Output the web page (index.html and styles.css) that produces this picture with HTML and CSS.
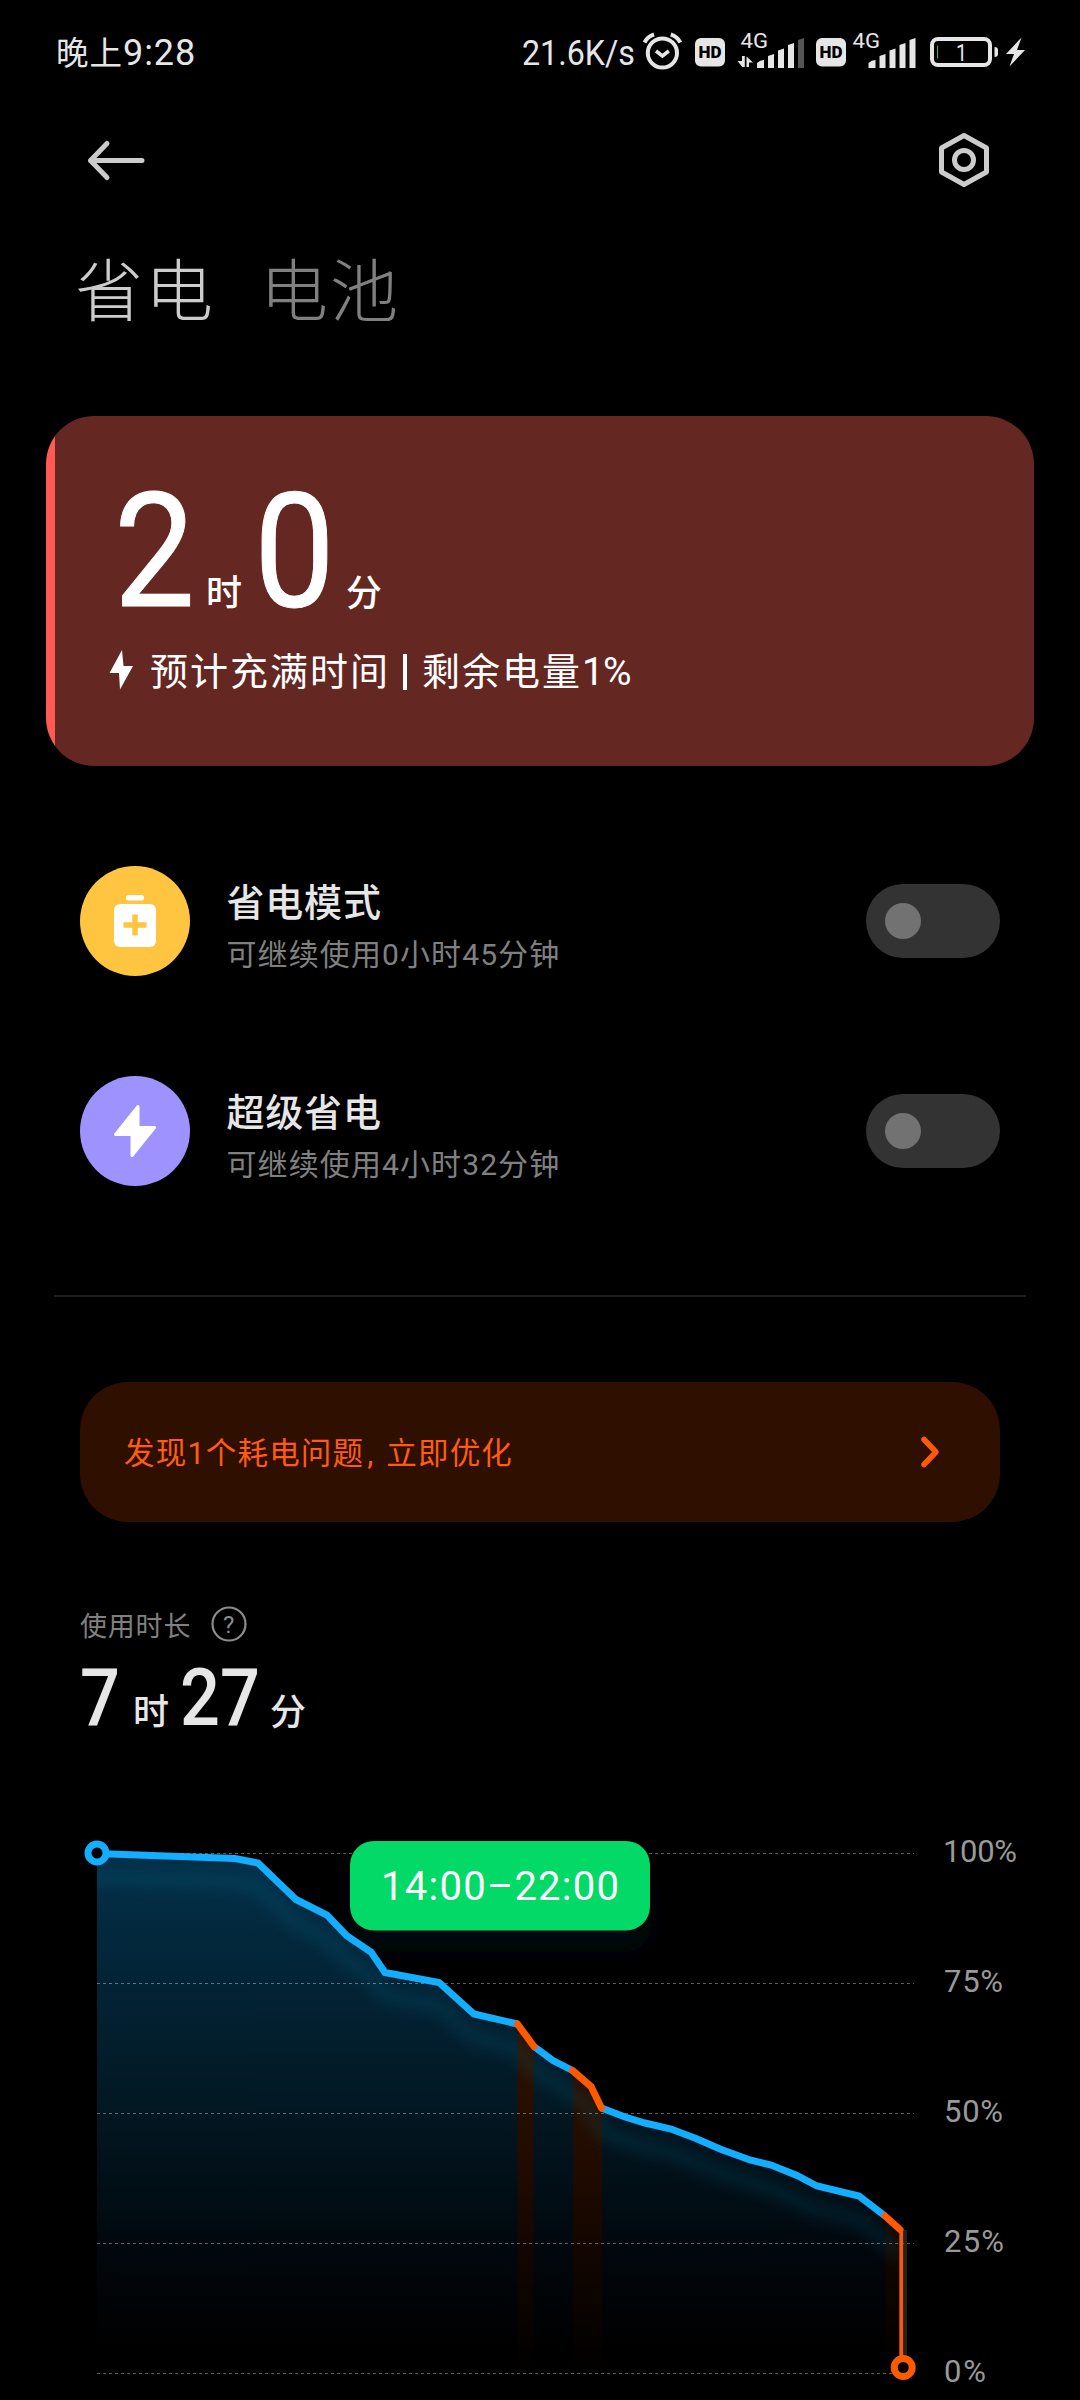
FILE: index.html
```
<!DOCTYPE html>
<html lang="zh-CN">
<head>
<meta charset="utf-8">
<title>省电与电池</title>
<link rel="stylesheet" href="styles.css">
</head>
<body>
<div class="screen">
  <header class="status">
    <div class="clock">晚上<span class="clock-digits">9:28</span></div>
    <svg class="status-icons" width="510" height="60" viewBox="520 20 510 60">
      <g fill="#e6e6e6">
        <text x="522" y="65" font-size="35" textLength="113" lengthAdjust="spacingAndGlyphs">21.6K/s</text>
        <g fill="none" stroke="#e6e6e6">
          <circle cx="662.4" cy="53" r="14.6" stroke-width="4"/>
          <path d="M656 51l6.400 5 6.400-5" stroke-width="3.500"/>
          <path d="M644.500 42.500q3-6 9.500-8M680.300 42.500q-3-6-9.500-8" stroke-width="4"/>
        </g>
        <rect x="695" y="38" width="30" height="28.500" rx="6"/>
        <rect x="816" y="38" width="30" height="28.500" rx="6"/>
        <g fill="#000" font-size="16.500" font-weight="900">
          <text x="698.500" y="58" textLength="23" lengthAdjust="spacingAndGlyphs">HD</text>
          <text x="819.500" y="58" textLength="23" lengthAdjust="spacingAndGlyphs">HD</text>
        </g>
        <text x="740.500" y="48" font-size="20" textLength="27.500" lengthAdjust="spacingAndGlyphs">4G</text>
        <text x="852.500" y="48" font-size="20" textLength="27.500" lengthAdjust="spacingAndGlyphs">4G</text>
        <path d="M742 56h2.800v11h-2.500l-4.800-6h4.500zM746.500 56.500l6.500 6h-4v4.500h-2.500z"/>
        <path d="M757 68v-5q3-3 7-3v8zM768 68V56l6-2v14zM778 68V50.500l6-2V68zM788 68V45l6-2v25z"/>
        <path d="M798 68V40l6-2v30z" fill="#555"/>
        <path d="M868.500 68v-5q3-3 7-3v8zM879.500 68V56l6-2v14zM889.500 68V50.500l6-2V68zM899.500 68V45l6-2v25zM909.500 68V40l6-2v30z"/>
        <rect x="932" y="39" width="58" height="26" rx="6" fill="none" stroke="#e6e6e6" stroke-width="4"/>
        <path d="M994.500 47q3.500 0 3.500 3v4q0 3-3.500 3z"/>
        <rect x="937" y="45.500" width="1" height="13" fill="#5fae3a"/>
        <text x="956" y="61" font-size="23" textLength="11" lengthAdjust="spacingAndGlyphs">1</text>
        <path d="M1021.500 37.500L1006 54h8l-4.500 12.500L1025 50h-8z"/>
      </g>
    </svg>
  </header>

  <nav class="bar">
    <svg class="back" width="62" height="46" viewBox="0 0 62 46" fill="none" stroke="#ccc" stroke-width="5" stroke-linecap="round" stroke-linejoin="round"><path d="M57 23.500H5.500M22 6.500L5.500 23.500l16.500 17"/></svg>
    <svg width="56" height="60" viewBox="0 0 56 60" fill="none" stroke="#ccc" stroke-width="5" stroke-linejoin="round"><path d="M28 5.500L50.500 18v24L28 54.500 5.500 42V18z"/><circle cx="28" cy="30" r="9.500"/></svg>
  </nav>

  <div class="tabs"><span class="tab active">省电</span><span class="tab">电池</span></div>

  <section class="card">
    <div class="charge-time"><span class="num">2</span><span class="unit">时</span><span class="num">0</span><span class="unit">分</span></div>
    <div class="charge-note">
      <svg width="26" height="40" viewBox="0 0 26 40" fill="#fff"><path d="M13 0L.5 23H10L11 39.500 24 16h-9.500z"/></svg>
      <span class="note-text">预计充满时间<i class="sep"></i>剩余电量<span class="pct">1%</span></span>
    </div>
  </section>

  <section class="modes">
    <div class="mode">
      <svg class="mode-icon" width="110" height="110" viewBox="0 0 110 110"><circle cx="55" cy="55" r="55" fill="#ffc540"/><rect x="46" y="29" width="18" height="5.500" rx="2.500" fill="#fff"/><rect x="34" y="38" width="42" height="43" rx="6" fill="#fff"/><path d="M55 48.500v21M43.500 59h23" stroke="#ffc540" stroke-width="5.500"/></svg>
      <div class="mode-text"><div class="mode-title">省电模式</div><div class="mode-sub">可继续使用<b>0</b>小时<b>45</b>分钟</div></div>
      <div class="toggle"><div class="knob"></div></div>
    </div>
    <div class="mode">
      <svg class="mode-icon" width="110" height="110" viewBox="0 0 110 110"><circle cx="55" cy="55" r="55" fill="#9d92ff"/><path d="M58 30.500L35.500 58.500H52V79.500L74.500 51.500H58z" fill="#fff" stroke="#fff" stroke-width="3" stroke-linejoin="round"/></svg>
      <div class="mode-text"><div class="mode-title">超级省电</div><div class="mode-sub">可继续使用<b>4</b>小时<b>32</b>分钟</div></div>
      <div class="toggle"><div class="knob"></div></div>
    </div>
  </section>

  <hr class="divider">

  <section class="banner">
    <span class="banner-text">发现<b>1</b>个耗电问题<span class="comma">,</span>立即优化</span>
    <svg width="22" height="34" viewBox="0 0 22 34" fill="none" stroke="#ff5a05" stroke-width="5.500" stroke-linecap="round" stroke-linejoin="round"><path d="M4 4.500L16 17 4 29.500"/></svg>
  </section>

  <section class="usage">
    <div class="usage-label"><span>使用时长</span><svg width="36" height="36" viewBox="0 0 36 36"><circle cx="18" cy="18" r="16.500" fill="none" stroke="#8c8c8c" stroke-width="2.200"/><text x="18" y="26.500" font-size="24" text-anchor="middle" fill="#8c8c8c">?</text></svg></div>
    <div class="usage-time"><span class="num hours">7</span><span class="unit">时</span><span class="num minutes">27</span><span class="unit">分</span></div>
  </section>

  <svg class="chart" width="1080" height="600" viewBox="0 1800 1080 600">
    <defs>
      <linearGradient id="area" gradientUnits="userSpaceOnUse" x1="0" y1="1853" x2="0" y2="2374">
        <stop offset="0" stop-color="#033049"/><stop offset=".5" stop-color="#021722"/><stop offset=".75" stop-color="#01080e"/><stop offset=".95" stop-color="#000"/>
      </linearGradient>
      <linearGradient id="heat" gradientUnits="userSpaceOnUse" x1="0" y1="2024" x2="0" y2="2374">
        <stop offset="0" stop-color="#2d1200"/><stop offset=".4" stop-color="#210b00"/><stop offset=".7" stop-color="#100500"/><stop offset="1" stop-color="#000"/>
      </linearGradient>
      <clipPath id="under"><path d="M97 1853.500L235 1858.500 258 1863 296 1899.500 327 1915 347 1936 371 1952 385 1972.500 439 1982.500 474 2014 517.500 2024 534 2046.500 553 2060.500 572.500 2070.500 591 2086.500 601.500 2108 625 2117 645 2123 671 2129 696 2138.500 720 2149 750 2160 771 2165 797 2175.500 817 2186 859 2196 885 2216 901 2231V2400H97z"/></clipPath>
      <filter id="soft" x="-10%" y="-10%" width="120%" height="120%"><feGaussianBlur stdDeviation="7"/></filter>
      <filter id="shade" x="-30%" y="-60%" width="160%" height="250%"><feGaussianBlur stdDeviation="14"/></filter>
    </defs>
    <rect x="350" y="1862" width="300" height="90" rx="24" fill="#030d16" opacity=".7" filter="url(#shade)"/>
    <g clip-path="url(#under)">
      <rect x="97" y="1850" width="805" height="524" fill="url(#area)"/>
      <path d="M517.500 2000h16v374h-16zM573 2040h29v334h-29zM885.500 2200h16v174h-16z" fill="url(#heat)"/>
      <path d="M70 1877L235 1882 258 1887 296 1923 327 1939 347 1960 371 1976 385 1996 439 2006 474 2038 517 2048 534 2070 572 2094 591 2110 601 2132 645 2147 671 2153 720 2173 771 2189 817 2210 859 2220 885 2240 901 2255" fill="none" stroke="#1688b8" stroke-opacity=".13" stroke-width="16" filter="url(#soft)"/>
    </g>
    <path d="M97 1853.500H914M97 1983.500H914M97 2113.500H914M97 2243.500H914M97 2373.500H901" stroke="#fff" stroke-opacity=".36" stroke-width="1" stroke-dasharray="3 3" fill="none"/>
    <rect x="904" y="2230" width="3" height="126" fill="#222"/>
    <g fill="none" stroke-width="7" stroke-linejoin="miter">
      <path stroke="#13aeff" d="M97 1853.500L235 1858.500 258 1863 296 1899.500 327 1915 347 1936 371 1952 385 1972.500 439 1982.500 474 2014 517.500 2024M534 2046.500L553 2060.500 572.500 2070.500M601.500 2108L625 2117 645 2123 671 2129 696 2138.500 720 2149 750 2160 771 2165 797 2175.500 817 2186 859 2196 885 2216"/>
      <path stroke="#ff5a00" stroke-linecap="round" d="M517.500 2024L534 2046.500M572.500 2070.500L591 2086.500 601.500 2108M885 2216L900 2229.500"/>
      <path stroke="#f15a12" stroke-width="4" d="M901.300 2229V2358"/>
    </g>
    <circle cx="97" cy="1853" r="9" fill="#000" stroke="#13aeff" stroke-width="7"/>
    <circle cx="903.200" cy="2367.500" r="9" fill="#000" stroke="#ff5a00" stroke-width="7"/>
    <rect x="350" y="1841" width="300" height="89.500" rx="24" fill="#03d967"/>
    <text x="381" y="1900" font-size="40" fill="#fff" textLength="238" lengthAdjust="spacing">14:00–22:00</text>
    <g font-size="31" fill="#999">
      <text x="943" y="1862" textLength="74">100%</text>
      <text x="944" y="1992" textLength="59">75%</text>
      <text x="944" y="2122" textLength="59">50%</text>
      <text x="944" y="2252" textLength="60">25%</text>
      <text x="944" y="2382" textLength="42">0%</text>
    </g>
  </svg>
</div>
</body>
</html>
```
FILE: styles.css
```
* { box-sizing: border-box; }
body { margin: 0; background: #000; }
.screen {
  width: 1080px;
  height: 2400px;
  overflow: hidden;
  display: flex;
  flex-direction: column;
  background: #000;
  color: #e6e6e6;
  font-family: Roboto, "Noto Sans CJK SC", sans-serif;
}
svg { display: block; flex: none; }
b { font-weight: 400; }

.status {
  height: 100px;
  padding: 20px 50px 20px 56px;
  display: flex;
  justify-content: space-between;
}
.clock { padding-top: 2px; font-size: 32.500px; line-height: 62px; letter-spacing: 1px; white-space: nowrap; }
.clock-digits { font-size: 36px; letter-spacing: .9px; }

.bar {
  height: 120px;
  padding: 0 88px 0 85px;
  display: flex;
  align-items: center;
  justify-content: space-between;
}

.tabs {
  height: 196px;
  padding: 17px 0 0 75px;
  display: flex;
  gap: 45px;
  font-size: 68px;
  line-height: 100px;
  font-weight: 200;
  font-family: "Noto Sans CJK SC", sans-serif;
  letter-spacing: 2px;
}
.tab { color: #808080; }
.tab.active { color: #ccc; }

.card {
  height: 350px;
  margin: 0 46px;
  padding: 56px 0 0 64px;
  border-radius: 48px;
  background: linear-gradient(90deg, #ff5b54 9px, #652722 9px);
  color: #fff;
}
.charge-time { display: flex; align-items: baseline; height: 160px; line-height: 160px; }
.num { display: inline-block; font-weight: 500; transform-origin: 0 50%; }
.charge-time .num { font-size: 160px; font-weight: 400; width: 88px; margin-left: 4px; transform: scaleX(.9); -webkit-text-stroke: 1px #fff; }
.charge-time .unit { font-size: 36px; font-weight: 500; width: 48px; padding-left: 4px; }
.charge-note { display: flex; align-items: center; gap: 15px; height: 76px; }
.charge-note svg { margin-left: -1px; }
.note-text { padding-top: 3px; font-size: 38px; line-height: 56px; letter-spacing: 2px; white-space: nowrap; }
.sep { display: inline-block; width: 4px; height: 36px; margin: 0 15px 0 13px; background: #fff; vertical-align: -5px; }
.pct { font-size: 39px; letter-spacing: -1px; }

.modes { padding-top: 100px; display: flex; flex-direction: column; gap: 100px; }
.mode { height: 110px; padding: 0 80px; display: flex; align-items: center; }
.mode-text { flex: 1; padding: 11px 0 0 36.500px; }
.mode-title { font-size: 38px; line-height: 56px; font-weight: 500; letter-spacing: .8px; }
.mode-sub { font-size: 30px; line-height: 48px; letter-spacing: 1.100px; color: #808080; white-space: nowrap; }
.toggle { width: 134px; height: 74px; padding: 19px; border-radius: 37px; background: #333; }
.knob { width: 36px; height: 36px; border-radius: 50%; background: #727272; }

.divider { width: 972px; height: 2px; margin: 109px auto 85px; border: 0; background: #1c1c1c; flex: none; }

.banner {
  height: 140px;
  margin: 0 80px;
  padding: 0 58px 0 44px;
  border-radius: 48px;
  background: #2e0f00;
  display: flex;
  align-items: center;
  justify-content: space-between;
}
.banner-text { padding-bottom: 2px; font-size: 30.500px; letter-spacing: 1.200px; color: #ff5c0f; white-space: nowrap; }
.comma { display: inline-block; width: 22px; padding-left: 3px; }

.usage { height: 278px; padding: 84px 0 0 80px; }
.usage-label { display: flex; align-items: center; gap: 20px; height: 36px; font-size: 27px; letter-spacing: .8px; color: #808080; }
.usage-time { display: flex; align-items: baseline; height: 100px; padding-top: 6px; line-height: 100px; }
.usage-time .num { font-size: 79px; transform: scaleX(.89); }
.usage-time .hours { width: 53px; }
.usage-time .minutes { width: 90px; }
.usage-time .unit { font-size: 36px; font-weight: 500; width: 47px; }

.chart { font-family: Roboto, sans-serif; }
```
